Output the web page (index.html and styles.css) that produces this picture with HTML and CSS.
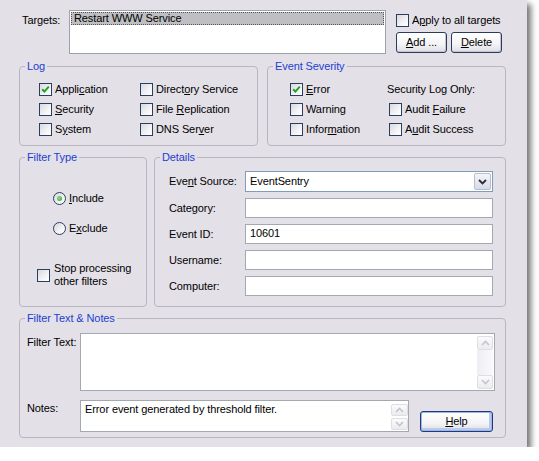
FILE: index.html
```html
<!DOCTYPE html>
<html>
<head>
<meta charset="utf-8">
<link rel="stylesheet" href="styles.css">
</head>
<body>
<div class="dialog">
  <div class="targets-row">
    <div class="lbl targets-lbl">Targets:</div>
    <div class="listbox">
      <div class="list-item">Restart WWW Service</div>
    </div>
    <div class="targets-side">
      <label class="chk"><span class="cb"></span><span>A<u>p</u>ply to all targets</span></label>
      <div class="btn-row">
        <button class="btn"><u>A</u>dd ...</button>
        <button class="btn"><u>D</u>elete</button>
      </div>
    </div>
  </div>

  <div class="row2">
    <fieldset class="grp log">
      <legend>Log</legend>
      <div class="log-body">
        <label class="chk"><span class="cb on"><svg viewBox="0 0 11 11"><path d="M2.2 5.2 L4.4 7.6 L8.8 2.6" fill="none" stroke="#21a121" stroke-width="2"/></svg></span><span>Appli<u>c</u>ation</span></label>
        <label class="chk"><span class="cb"></span><span>Direct<u>o</u>ry Service</span></label>
        <label class="chk"><span class="cb"></span><span><u>S</u>ecurity</span></label>
        <label class="chk"><span class="cb"></span><span>File <u>R</u>eplication</span></label>
        <label class="chk"><span class="cb"></span><span>S<u>y</u>stem</span></label>
        <label class="chk"><span class="cb"></span><span>DNS Ser<u>v</u>er</span></label>
      </div>
    </fieldset>
    <fieldset class="grp sev">
      <legend>Event Severity</legend>
      <div class="sev-body">
        <label class="chk"><span class="cb on"><svg viewBox="0 0 11 11"><path d="M2.2 5.2 L4.4 7.6 L8.8 2.6" fill="none" stroke="#21a121" stroke-width="2"/></svg></span><span><u>E</u>rror</span></label>
        <div class="sec-only">Security Log Only:</div>
        <label class="chk"><span class="cb"></span><span>Warning</span></label>
        <label class="chk ind"><span class="cb"></span><span>Audit <u>F</u>ailure</span></label>
        <label class="chk"><span class="cb"></span><span>Infor<u>m</u>ation</span></label>
        <label class="chk ind"><span class="cb"></span><span>A<u>u</u>dit Success</span></label>
      </div>
    </fieldset>
  </div>

  <div class="row3">
    <fieldset class="grp ftype">
      <legend>Filter Type</legend>
      <div class="ftype-body">
        <label class="rad"><span class="rb on"></span><span><u>I</u>nclude</span></label>
        <label class="rad excl"><span class="rb"></span><span>E<u>x</u>clude</span></label>
        <label class="chk stop"><span class="cb"></span><span>Stop processing<br>other filters</span></label>
      </div>
    </fieldset>
    <fieldset class="grp details">
      <legend>Details</legend>
      <div class="det-body">
        <div class="lbl">Eve<u>n</u>t Source:</div>
        <div class="combo"><span class="combo-text">EventSentry</span><span class="combo-btn"><svg viewBox="0 0 9 6" width="9" height="6"><path d="M1 1 L4.5 4.5 L8 1" fill="none" stroke="#2b2f3a" stroke-width="1.8"/></svg></span></div>
        <div class="lbl">Category:</div>
        <div class="edit"></div>
        <div class="lbl">Event ID:</div>
        <div class="edit">10601</div>
        <div class="lbl">Username:</div>
        <div class="edit"></div>
        <div class="lbl">Computer:</div>
        <div class="edit"></div>
      </div>
    </fieldset>
  </div>

  <fieldset class="grp notes-grp">
    <legend>Filter Text &amp; Notes</legend>
    <div class="notes-body">
      <div class="ft-row">
        <div class="lbl nlbl">Filter Text:</div>
        <div class="memo ft">
          <div class="memo-text"></div>
          <div class="vscroll">
            <span class="sbtn"><svg viewBox="0 0 9 6" width="9" height="6"><path d="M1 5 L4.5 1.5 L8 5" fill="none" stroke="#c4c4ca" stroke-width="1.6"/></svg></span>
            <span class="strack"></span>
            <span class="sbtn"><svg viewBox="0 0 9 6" width="9" height="6"><path d="M1 1 L4.5 4.5 L8 1" fill="none" stroke="#c4c4ca" stroke-width="1.6"/></svg></span>
          </div>
        </div>
      </div>
      <div class="notes-row">
        <div class="lbl nlbl2">Notes:</div>
        <div class="memo nt">
          <div class="memo-text">Error event generated by threshold filter.</div>
          <div class="vscroll small">
            <span class="sbtn"><svg viewBox="0 0 9 6" width="9" height="6"><path d="M1 5 L4.5 1.5 L8 5" fill="none" stroke="#c4c4ca" stroke-width="1.6"/></svg></span>
            <span class="sbtn"><svg viewBox="0 0 9 6" width="9" height="6"><path d="M1 1 L4.5 4.5 L8 1" fill="none" stroke="#c4c4ca" stroke-width="1.6"/></svg></span>
          </div>
        </div>
        <button class="btn help"><u>H</u>elp</button>
      </div>
    </div>
  </fieldset>
</div>
</body>
</html>
```

FILE: styles.css
```css
* { box-sizing: border-box; }
html, body { margin: 0; padding: 0; background: #ffffff; }
body {
  font-family: "Liberation Sans", Arial, sans-serif;
  font-size: 11px;
  line-height: 13px;
  color: #000;
  letter-spacing: -0.1px;
}
u { text-decoration: underline; text-underline-offset: 1px; }

.dialog {
  width: 527px;
  height: 447px;
  background: #e4e0e8;
  padding: 10px 21px 0 19px;
  box-shadow: 4px 4px 6px rgba(0, 0, 0, 0.55);
}

/* Targets */
.targets-row { display: flex; height: 44px; }
.targets-lbl { width: 50px; padding: 4px 0 0 3px; }
.listbox {
  width: 317px;
  height: 44px;
  background: #fff;
  border: 1px solid #9aa3ac;
  padding: 1px;
}
.list-item {
  height: 13px;
  background: #bfbfc3;
  outline: 1px dotted #555;
  outline-offset: -1px;
  padding-left: 3px;
  line-height: 13px;
}
.targets-side { margin-left: 10px; padding-top: 4px; display: flex; flex-direction: column; }
.btn-row { display: flex; gap: 4px; margin-top: 5px; }

.btn {
  font: inherit;
  letter-spacing: inherit;
  color: #000;
  width: 51px;
  height: 21px;
  padding: 0;
  border: 1px solid #2c3a5c;
  border-radius: 3px;
  background: linear-gradient(#ffffff 0%, #f4f4f6 60%, #dcdce4 100%);
  box-shadow: inset -1px -1px 0 #c6c6d0;
  text-align: center;
}

/* Checkboxes and radios */
.chk { display: flex; align-items: center; height: 13px; white-space: nowrap; }
.cb {
  flex: none;
  width: 13px;
  height: 13px;
  border: 1px solid #2a3f5f;
  background: linear-gradient(135deg, #d8d8de 0%, #f4f4f6 60%, #ffffff 100%);
  margin-right: 3px;
  display: flex;
  align-items: center;
  justify-content: center;
}
.cb svg { width: 11px; height: 11px; display: block; }
.rad { display: flex; align-items: center; height: 13px; white-space: nowrap; }
.rb {
  flex: none;
  width: 13px;
  height: 13px;
  border-radius: 50%;
  border: 1px solid #2a3f5f;
  background: linear-gradient(135deg, #d6d6dc 0%, #f4f4f6 60%, #ffffff 100%);
  margin-right: 3px;
  display: flex;
  align-items: center;
  justify-content: center;
}
.rb.on::after {
  content: "";
  width: 5px;
  height: 5px;
  border-radius: 50%;
  background: radial-gradient(circle at 40% 40%, #8fe08f, #21a121);
}

/* Group boxes */
.grp {
  margin: 0;
  padding: 0;
  border: 1px solid #b9b5c2;
  border-radius: 4px;
  min-width: 0;
}
.grp legend {
  padding: 0 2px;
  margin-left: 5px;
  color: #1c3fcf;
  line-height: 13px;
}

.row2 { display: flex; gap: 9px; margin-top: 6px; height: 86px; }
.log, .sev { width: 239px; height: 86px; }
.log-body {
  display: grid;
  grid-template-columns: 101px auto;
  row-gap: 7px;
  padding: 10px 0 0 19px;
}
.sev-body {
  display: grid;
  grid-template-columns: 97px auto;
  row-gap: 7px;
  padding: 10px 0 0 22px;
}
.sec-only { height: 13px; white-space: nowrap; }
.ind { margin-left: 2px; }

.row3 { display: flex; gap: 7px; margin-top: 5px; height: 156px; }
.ftype { width: 128px; height: 156px; }
.ftype-body { padding: 28px 0 0 33px; display: flex; flex-direction: column; }
.excl { margin-top: 17px; }
.stop { margin-top: 27px; margin-left: -16px; height: 26px; white-space: normal; }
.stop .cb { margin-right: 4px; }
.details { width: 352px; height: 156px; }
.det-body {
  display: grid;
  grid-template-columns: 76px 248px;
  grid-template-rows: 21px 20px 20px 20px 20px;
  row-gap: 6px;
  align-items: center;
  padding: 7px 0 0 14px;
}
.edit {
  height: 20px;
  background: #fff;
  border: 1px solid #a3a9b0;
  padding: 2px 0 0 4px;
}
.combo {
  height: 21px;
  background: #fff;
  border: 1px solid #7f9db9;
  display: flex;
  align-items: center;
  padding: 1px;
}
.combo-text { flex: 1; padding-left: 3px; }
.combo-btn {
  width: 17px;
  height: 17px;
  border: 1px solid #b7bfcf;
  border-radius: 2px;
  background: linear-gradient(#f4f5f9, #d9dbe6);
  display: flex;
  align-items: center;
  justify-content: center;
}

.notes-grp { margin-top: 5px; width: 487px; height: 126px; }
.notes-body { padding: 8px 0 0 7px; }
.ft-row { display: flex; }
.nlbl { width: 53px; padding-top: 3px; }
.nlbl2 { width: 53px; padding-top: 2px; align-self: flex-start; }
.memo {
  background: #fff;
  border: 1px solid #a3a9b0;
  display: flex;
}
.ft { width: 415px; height: 58px; }
.memo-text { flex: 1; padding: 2px 4px; white-space: nowrap; overflow: hidden; }
.vscroll {
  width: 17px;
  padding: 2px 1px 1px 0;
  display: flex;
  flex-direction: column;
}
.strack { flex: 1; background: linear-gradient(90deg, #eeeef4, #fafafd); border-left: 1px solid #f0f0f4; }
.sbtn {
  height: 14px;
  border: 1px solid #dedee4;
  border-radius: 2px;
  background: linear-gradient(#fbfbfc, #ececf0);
  display: flex;
  align-items: center;
  justify-content: center;
}
.vscroll.small { padding: 3px 0 1px 0; gap: 2px; }
.vscroll.small .sbtn { height: 12px; }
.notes-row { display: flex; align-items: flex-end; margin-top: 9px; }
.nt { width: 329px; height: 32px; align-self: flex-start; }
.help {
  width: 73px;
  margin-left: 11px;
  border-color: #1f3a78;
  box-shadow: inset 0 0 0 1px #9db6e6, inset -1px -1px 0 2px #b8cbee;
}
```
